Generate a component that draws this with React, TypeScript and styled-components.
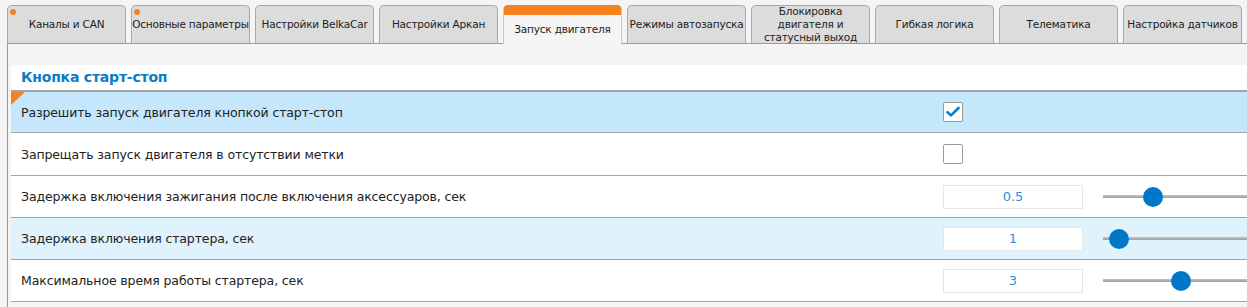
import React from 'react';
import styled, { createGlobalStyle } from 'styled-components';

const GlobalStyle = createGlobalStyle`
  html, body {
    margin: 0;
    padding: 0;
    background: #f4f4f4;
    overflow: hidden;
  }
  body {
    font-family: "DejaVu Sans", Verdana, sans-serif;
    color: #222;
  }
`;

const Page = styled.div`
  width: 1400px;
  padding: 5px 0 0 7px;
`;

const TabBar = styled.div`
  display: flex;
  gap: 5px;
  border-bottom: 1px solid #9a9a9a;
`;

const Tab = styled.div<{ $active?: boolean }>`
  position: relative;
  flex: 0 0 119px;
  box-sizing: border-box;
  display: flex;
  align-items: center;
  justify-content: center;
  text-align: center;
  font-size: 10.5px;
  line-height: 13px;
  letter-spacing: -0.2px;
  white-space: pre-line;
  border: 1px solid #a8a8a8;
  border-bottom: none;
  border-radius: 5px 5px 0 0;
  background: ${(p) => (p.$active ? '#f4f4f4' : '#dcdcdc')};
  margin-bottom: ${(p) => (p.$active ? '-1px' : '0')};
  height: ${(p) => (p.$active ? '39px' : '38px')};
  overflow: hidden;
  ${(p) =>
    p.$active &&
    `
    border-top: 10px solid #f5821f;
    border-left-color: #c8c8c8;
    border-right-color: #c8c8c8;
  `}
`;

const Dot = styled.span<{ $light?: boolean }>`
  position: absolute;
  width: 6px;
  height: 6px;
  border-radius: 50%;
  background: ${(p) => (p.$light ? '#fff' : '#f5821f')};
  left: ${(p) => (p.$light ? '3px' : '2px')};
  top: ${(p) => (p.$light ? '-8px' : '3px')};
`;

const Panel = styled.div`
  border-left: 1px solid #9a9a9a;
  padding: 21px 0 0 3px;
  height: 300px;
`;

const Section = styled.div`
  background: #fff;
`;

const Title = styled.div`
  height: 27px;
  box-sizing: border-box;
  padding: 4px 0 0 10px;
  font-size: 14px;
  font-weight: bold;
  letter-spacing: -0.2px;
  color: #0a7cc8;
  border-bottom: 2px solid #a3a3a3;
`;

const Row = styled.div<{ $bg?: string; $h?: number }>`
  position: relative;
  display: flex;
  align-items: center;
  height: ${(p) => p.$h ?? 42}px;
  box-sizing: border-box;
  border-bottom: 1px solid #a3a3a3;
  background: ${(p) => p.$bg ?? '#fff'};
`;

const Label = styled.div`
  flex: 0 0 932px;
  box-sizing: border-box;
  padding-left: 10px;
  font-size: 12.5px;
  letter-spacing: -0.12px;
  color: #222;
`;

const Corner = styled.div`
  position: absolute;
  left: 0;
  top: 0;
  width: 0;
  height: 0;
  border-top: 13px solid #f5821f;
  border-right: 14px solid transparent;
`;

const CheckBox = styled.div`
  width: 20px;
  height: 20px;
  box-sizing: border-box;
  border: 1px solid #9a9a9a;
  border-radius: 2px;
  background: #fff;
  display: flex;
  align-items: center;
  justify-content: center;
`;

const NumberBox = styled.div`
  width: 140px;
  height: 24px;
  box-sizing: border-box;
  border: 1px solid #e6e6e6;
  background: #fff;
  display: flex;
  align-items: center;
  justify-content: center;
  font-size: 13px;
  color: #2c8fd8;
`;

const Slider = styled.div`
  position: relative;
  margin-left: 20px;
  width: 300px;
  height: 20px;
  display: flex;
  align-items: center;
`;

const Track = styled.div`
  width: 100%;
  height: 3px;
  background: linear-gradient(#c4c4c4, #9c9c9c);
`;

const Thumb = styled.div`
  position: absolute;
  top: 0;
  width: 20px;
  height: 20px;
  margin-left: -10px;
  border-radius: 50%;
  background: #0077c8;
`;

const tabs = [
  { label: 'Каналы и CAN', dot: true },
  { label: 'Основные параметры', dot: true },
  { label: 'Настройки BelkaCar' },
  { label: 'Настройки Аркан' },
  { label: 'Запуск двигателя', active: true },
  { label: 'Режимы автозапуска' },
  { label: 'Блокировка\nдвигателя и\nстатусный выход' },
  { label: 'Гибкая логика' },
  { label: 'Телематика' },
  { label: 'Настройка датчиков' },
  { label: '' },
];

const Check = () => (
  <svg width="14" height="12" viewBox="0 0 14 12">
    <path d="M1.5 6.2 L5 9.4 L12.5 2" fill="none" stroke="#0a7cd0" strokeWidth="2.6" strokeLinecap="round" strokeLinejoin="round" />
  </svg>
);

const NumberRow = ({ label, value, pos, bg }: { label: string; value: string; pos: number; bg?: string }) => (
  <Row $bg={bg}>
    <Label>{label}</Label>
    <NumberBox>{value}</NumberBox>
    <Slider>
      <Track />
      <Thumb style={{ left: pos }} />
    </Slider>
  </Row>
);

export default function App() {
  return (
    <>
      <GlobalStyle />
      <Page>
        <TabBar>
          {tabs.map((t, i) => (
            <Tab key={i} $active={t.active}>
              {t.dot && <Dot />}
              {t.active && <Dot $light />}
              {t.label}
            </Tab>
          ))}
        </TabBar>
        <Panel>
          <Section>
            <Title>Кнопка старт-стоп</Title>
            <Row $bg="#c4e7fb" $h={41}>
              <Corner />
              <Label>Разрешить запуск двигателя кнопкой старт-стоп</Label>
              <CheckBox>
                <Check />
              </CheckBox>
            </Row>
            <Row $h={43}>
              <Label>Запрещать запуск двигателя в отсутствии метки</Label>
              <CheckBox />
            </Row>
            <NumberRow label="Задержка включения зажигания после включения аксессуаров, сек" value="0.5" pos={50} />
            <NumberRow label="Задержка включения стартера, сек" value="1" pos={16} bg="#e0f2fb" />
            <NumberRow label="Максимальное время работы стартера, сек" value="3" pos={78} />
          </Section>
        </Panel>
      </Page>
    </>
  );
}
